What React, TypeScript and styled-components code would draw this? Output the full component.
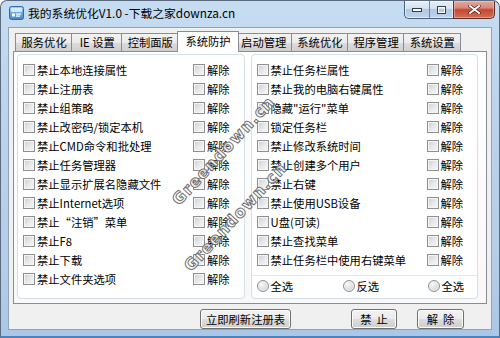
import { createGlobalStyle, styled } from 'styled-components';

const FONT = `"Noto Sans CJK SC", "Liberation Sans", sans-serif`;

const GlobalStyle = createGlobalStyle`
  html, body {
    margin: 0;
    padding: 0;
    width: 500px;
    height: 338px;
    overflow: hidden;
    background: #ffffff;
  }
  * { box-sizing: border-box; }
`;

const TABS = ['服务优化', 'IE 设置', '控制面版', '系统防护', '启动管理', '系统优化', '程序管理', '系统设置'];
const ACTIVE_TAB = 3;

const LEFT_ITEMS = [
  '禁止本地连接属性',
  '禁止注册表',
  '禁止组策略',
  '禁止改密码/锁定本机',
  '禁止CMD命令和批处理',
  '禁止任务管理器',
  '禁止显示扩展名隐藏文件',
  '禁止Internet选项',
  '禁止“注销”菜单',
  '禁止F8',
  '禁止下载',
  '禁止文件夹选项',
];

const RIGHT_ITEMS = [
  '禁止任务栏属性',
  '禁止我的电脑右键属性',
  '隐藏"运行"菜单',
  '锁定任务栏',
  '禁止修改系统时间',
  '禁止创建多个用户',
  '禁止右键',
  '禁止使用USB设备',
  'U盘(可读)',
  '禁止查找菜单',
  '禁止任务栏中使用右键菜单',
];

const RADIOS = ['全选', '反选', '全选'];

const App = () => {
  return (
    <>
      <GlobalStyle />
      <Window>
        <TitleBar>
          <AppIcon width="15" height="14" viewBox="0 0 15 14">
            <defs>
              <linearGradient id="ig" x1="0" y1="0" x2="0" y2="1">
                <stop offset="0" stopColor="#9fd0f5" />
                <stop offset="1" stopColor="#3b86d0" />
              </linearGradient>
            </defs>
            <rect x="0.5" y="0.5" width="14" height="13" rx="2" fill="url(#ig)" stroke="#2f6aa8" />
            <rect x="2" y="2" width="11" height="4" rx="1" fill="#e8f5ff" opacity="0.8" />
            <rect x="3" y="7.5" width="3" height="3" fill="#ffffff" />
            <rect x="7" y="7.5" width="5" height="1.2" fill="#ffffff" />
            <rect x="7" y="9.5" width="4" height="1.2" fill="#ffffff" />
          </AppIcon>
          <TitleText>我的系统优化V1.0 -下载之家downza.cn</TitleText>
          <Controls>
            <MinMaxGroup>
              <CaptionButton>
                <svg width="10" height="4" viewBox="0 0 10 4">
                  <rect x="0.5" y="0.5" width="9" height="3" fill="#ffffff" stroke="#2d3e55" />
                </svg>
              </CaptionButton>
              <CaptionButton $divider>
                <svg width="9" height="8" viewBox="0 0 9 8">
                  <rect x="0.5" y="0.5" width="8" height="7" fill="none" stroke="#2d3e55" />
                  <rect x="1.5" y="1.5" width="6" height="5" fill="none" stroke="#ffffff" />
                </svg>
              </CaptionButton>
            </MinMaxGroup>
            <CloseButton>
              <svg width="13" height="9" viewBox="0 0 13 9">
                <path d="M2 1 L11 8 M11 1 L2 8" stroke="#5a2018" strokeWidth="3.4" strokeLinecap="round" />
                <path d="M2 1 L11 8 M11 1 L2 8" stroke="#ffffff" strokeWidth="2" strokeLinecap="round" />
              </svg>
            </CloseButton>
          </Controls>
        </TitleBar>

        <Client>
          <TabStrip>
            {TABS.map((tab, i) => (
              <Tab key={tab} $active={i === ACTIVE_TAB}>
                {tab}
              </Tab>
            ))}
          </TabStrip>
          <TabPage>
            <Panel>
              {LEFT_ITEMS.map((item) => (
                <Row key={item}>
                  <Option>
                    <CheckBox />
                    <Label>{item}</Label>
                  </Option>
                  <Option>
                    <CheckBox />
                    <Label>解除</Label>
                  </Option>
                </Row>
              ))}
            </Panel>
            <Panel>
              {RIGHT_ITEMS.map((item) => (
                <Row key={item}>
                  <Option>
                    <CheckBox />
                    <Label>{item}</Label>
                  </Option>
                  <Option>
                    <CheckBox />
                    <Label>解除</Label>
                  </Option>
                </Row>
              ))}
              <Separator />
              <RadioRow>
                {RADIOS.map((r, i) => (
                  <Option key={i}>
                    <Radio />
                    <Label>{r}</Label>
                  </Option>
                ))}
              </RadioRow>
            </Panel>
          </TabPage>
          <ButtonRow>
            <Button $width={91}>立即刷新注册表</Button>
            <Button $width={46} $gap={60}>禁&nbsp;&nbsp;止</Button>
            <Button $width={47} $gap={20}>解&nbsp;&nbsp;除</Button>
          </ButtonRow>
        </Client>

        <Watermark $left={174} $top={192}>Greendown.cn</Watermark>
        <Watermark $left={186} $top={258}>Greendown.cn</Watermark>
      </Window>
    </>
  );
};

export default App;

const Window = styled.div`
  position: relative;
  display: flex;
  flex-direction: column;
  width: 500px;
  height: 338px;
  background: linear-gradient(180deg, #c6dcf1 0%, #bcd4ec 30%, #b4cde8 80%, #a9c7e6 100%);
  border: 1px solid #5b6c80;
  border-bottom: 2px solid #4f82bd;
  border-radius: 7px 7px 0 0;
  overflow: hidden;
  font-family: ${FONT};
`;

const TitleBar = styled.div`
  display: flex;
  align-items: flex-start;
  height: 27px;
  padding-left: 8px;
`;

const AppIcon = styled.svg`
  margin-top: 5px;
  flex-shrink: 0;
`;

const TitleText = styled.div`
  margin-left: 4px;
  margin-top: 4px;
  font-size: 11.8px;
  line-height: 16px;
  color: #000;
  white-space: nowrap;
`;

const Controls = styled.div`
  display: flex;
  margin-left: auto;
  margin-right: 4px;
`;

const MinMaxGroup = styled.div`
  display: flex;
  height: 18px;
  border: 1px solid #48607f;
  border-top: none;
  border-right: none;
  border-radius: 0 0 0 5px;
  overflow: hidden;
  background: linear-gradient(180deg, #e6eef7 0%, #d4e2f0 45%, #b3c9e2 50%, #bcd3eb 100%);
  box-shadow: inset 0 0 0 1px rgba(255, 255, 255, 0.6);
`;

const CaptionButton = styled.div<{ $divider?: boolean }>`
  display: flex;
  align-items: center;
  justify-content: center;
  width: 24px;
  height: 100%;
  border-left: ${(p) => (p.$divider ? '1px solid #6d84a3' : 'none')};
`;

const CloseButton = styled.div`
  display: flex;
  align-items: center;
  justify-content: center;
  width: 42px;
  height: 18px;
  border: 1px solid #5c2b26;
  border-top: none;
  border-radius: 0 0 5px 0;
  background: linear-gradient(180deg, #e3a79d 0%, #d48a7c 40%, #c4472f 52%, #d0705c 100%);
  box-shadow: inset 0 0 0 1px rgba(255, 220, 210, 0.45);
`;

const Client = styled.div`
  flex: 1;
  display: flex;
  flex-direction: column;
  margin: 0 7px 6px 7px;
  padding: 2px 4px 0 4px;
  background: #f0f0f0;
  border: 1px solid #8ea4bd;
`;

const TabStrip = styled.div`
  display: flex;
  align-items: flex-end;
  height: 21px;
  padding-left: 2px;
  position: relative;
  z-index: 1;
`;

const Tab = styled.div<{ $active?: boolean }>`
  min-width: 52px;
  height: ${(p) => (p.$active ? '21px' : '18px')};
  margin: ${(p) => (p.$active ? '0 -2px -1px -2px' : '0')};
  padding: ${(p) => (p.$active ? '0 7px' : '0 5.5px')};
  border: 1px solid #898c95;
  border-bottom: none;
  background: ${(p) =>
    p.$active ? '#ffffff' : 'linear-gradient(180deg, #f3f3f3 0%, #ebebeb 50%, #dddddd 51%, #cfcfcf 100%)'};
  font-size: 11.3px;
  line-height: ${(p) => (p.$active ? '19px' : '16px')};
  text-align: center;
  color: #000;
  white-space: nowrap;
  position: relative;
  z-index: ${(p) => (p.$active ? 2 : 1)};
  & + & {
    margin-left: ${(p) => (p.$active ? '-2px' : '-1px')};
  }
`;

const TabPage = styled.div`
  display: flex;
  gap: 6px;
  height: 253px;
  padding: 2px 8px 4px 3px;
  background: linear-gradient(180deg, #ffffff 0%, #f8f8f8 100%);
  border: 1px solid #898c95;
`;

const Panel = styled.div`
  flex: 1;
  display: flex;
  flex-direction: column;
  padding: 5px 0 0 5px;
  background: #ffffff;
  border: 1px solid #d5dfe5;
  border-radius: 4px;
`;

const Row = styled.div`
  display: grid;
  grid-template-columns: 170px auto;
  align-items: center;
  height: 19px;
`;

const Option = styled.label`
  display: flex;
  align-items: center;
  gap: 2px;
`;

const CheckBox = styled.span`
  display: block;
  width: 12px;
  height: 12px;
  flex-shrink: 0;
  border: 1px solid #8e8f8f;
  background: linear-gradient(135deg, #c9cdd3 0%, #e6e8eb 50%, #f7f7f7 100%);
  box-shadow: inset 0 0 0 1px #f5f5f5;
`;

const Radio = styled.span`
  display: block;
  width: 12px;
  height: 12px;
  flex-shrink: 0;
  border: 1px solid #8e8f8f;
  border-radius: 50%;
  background: radial-gradient(circle at 35% 35%, #f8f8f8 0%, #dcdcdc 60%, #c8c8c8 100%);
  box-shadow: inset 0 0 0 1px #f5f5f5;
`;

const Label = styled.span`
  font-size: 11.3px;
  line-height: 14px;
  color: #000;
  white-space: nowrap;
`;

const Separator = styled.div`
  height: 1px;
  margin: 6px 0 0 -5px;
  background: #e3e6ea;
`;

const RadioRow = styled.div`
  display: grid;
  grid-template-columns: 86px 85px auto;
  align-items: center;
  height: 19px;
`;

const ButtonRow = styled.div`
  display: flex;
  padding: 5px 0 0 187px;
`;

const Button = styled.div<{ $width: number; $gap?: number }>`
  display: flex;
  align-items: center;
  justify-content: center;
  width: ${(p) => p.$width}px;
  height: 20px;
  margin-left: ${(p) => p.$gap ?? 0}px;
  border: 1px solid #707070;
  border-radius: 3px;
  background: linear-gradient(180deg, #f2f2f2 0%, #ebebeb 50%, #dddddd 51%, #cfcfcf 100%);
  box-shadow: inset 0 0 0 1px #fcfcfc;
  font-size: 11.3px;
  color: #000;
  white-space: nowrap;
`;

const Watermark = styled.span<{ $left: number; $top: number }>`
  position: absolute;
  left: ${(p) => p.$left}px;
  top: ${(p) => p.$top}px;
  transform: rotate(-47deg);
  transform-origin: left center;
  font-family: "DejaVu Sans", sans-serif;
  font-weight: bold;
  font-size: 16px;
  letter-spacing: 1px;
  color: rgba(255, 255, 255, 0.85);
  -webkit-text-stroke: 1px #6f6f6f;
  pointer-events: none;
  white-space: nowrap;
`;
